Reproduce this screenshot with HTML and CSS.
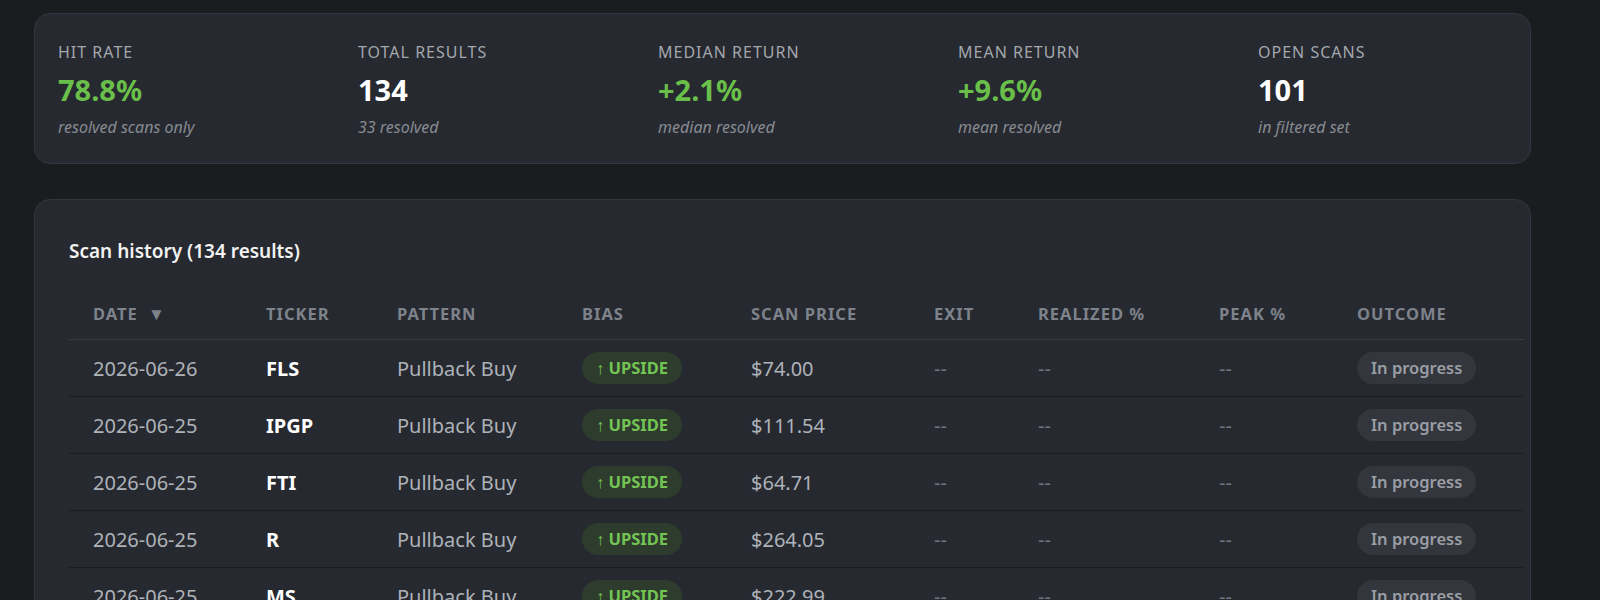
FILE: index.html
```html
<!DOCTYPE html>
<html lang="en">
<head>
    <meta charset="UTF-8">
    <meta name="viewport" content="width=device-width, initial-scale=1.0">
    <title>Scan History</title>
    <link rel="stylesheet" href="styles.css">
</head>
<body>

    <div class="page">

        <!-- Summary stats -->
        <div class="card stats">
            <div class="stat">
                <div class="stat-label">Hit Rate</div>
                <div class="stat-value green">78.8%</div>
                <div class="stat-sub">resolved scans only</div>
            </div>
            <div class="stat">
                <div class="stat-label">Total Results</div>
                <div class="stat-value">134</div>
                <div class="stat-sub">33 resolved</div>
            </div>
            <div class="stat">
                <div class="stat-label">Median Return</div>
                <div class="stat-value green">+2.1%</div>
                <div class="stat-sub">median resolved</div>
            </div>
            <div class="stat">
                <div class="stat-label">Mean Return</div>
                <div class="stat-value green">+9.6%</div>
                <div class="stat-sub">mean resolved</div>
            </div>
            <div class="stat">
                <div class="stat-label">Open Scans</div>
                <div class="stat-value">101</div>
                <div class="stat-sub">in filtered set</div>
            </div>
        </div>

        <!-- History table -->
        <div class="card history">
            <h3 class="history-title">Scan history (134 results)</h3>
            <table class="scan-table">
                <colgroup>
                    <col style="width: 173px">
                    <col style="width: 131px">
                    <col style="width: 185px">
                    <col style="width: 169px">
                    <col style="width: 183px">
                    <col style="width: 104px">
                    <col style="width: 181px">
                    <col style="width: 138px">
                    <col style="width: 191px">
                </colgroup>
                <thead>
                    <tr>
                        <th>Date <span class="sort">&#9660;</span></th>
                        <th>Ticker</th>
                        <th>Pattern</th>
                        <th>Bias</th>
                        <th>Scan Price</th>
                        <th>Exit</th>
                        <th>Realized %</th>
                        <th>Peak %</th>
                        <th>Outcome</th>
                    </tr>
                </thead>
                <tbody id="scanBody"></tbody>
            </table>
        </div>

    </div>

    <script>
        let scans = [
            { date: "2026-06-26", ticker: "FLS", price: 74.00 },
            { date: "2026-06-25", ticker: "IPGP", price: 111.54 },
            { date: "2026-06-25", ticker: "FTI", price: 64.71 },
            { date: "2026-06-25", ticker: "R", price: 264.05 },
            { date: "2026-06-25", ticker: "MS", price: 222.99 }
        ];

        function displayScans() {
            let body = document.getElementById("scanBody");
            body.innerHTML = scans.map(s =>
                `<tr>
                    <td>${s.date}</td>
                    <td class="ticker">${s.ticker}</td>
                    <td>Pullback Buy</td>
                    <td><span class="pill upside">&uarr; UPSIDE</span></td>
                    <td>$${s.price.toFixed(2)}</td>
                    <td class="empty">--</td>
                    <td class="empty">--</td>
                    <td class="empty">--</td>
                    <td><span class="pill progress">In progress</span></td>
                </tr>`
            ).join('');
        }

        displayScans();
    </script>

</body>
</html>
```

FILE: styles.css
```css
body {
    margin: 0;
    font-family: "Noto Sans", "Open Sans", sans-serif;
    background-color: #1b1c20;
    color: #aeb2b9;
}

.page {
    padding: 13px 69px 0 34px;
}

/* Cards */
.card {
    background-color: #26292f;
    border: 1px solid #33363d;
    border-radius: 16px;
}

/* Stats row */
.stats {
    display: grid;
    grid-template-columns: repeat(5, 300px);
    padding: 27px 23px 25px;
}

.stat-label {
    font-size: 16px;
    line-height: 22px;
    letter-spacing: 1px;
    text-transform: uppercase;
    color: #a3a7ae;
}

.stat-value {
    margin-top: 9px;
    font-size: 29px;
    line-height: 36px;
    font-weight: 700;
    color: #ffffff;
}

.stat-value.green {
    color: #6abf4b;
}

.stat-sub {
    margin-top: 8px;
    font-size: 16px;
    line-height: 22px;
    font-style: italic;
    color: #878b92;
}

/* History card */
.history {
    margin-top: 35px;
    padding: 38px 6px 0 34px;
    height: 420px;
}

.history-title {
    margin: 0 0 24px;
    font-size: 19px;
    line-height: 26px;
    font-weight: 600;
    color: #f2f2f2;
}

.scan-table {
    width: 1455px;
    table-layout: fixed;
    border-collapse: collapse;
}

th, td {
    padding: 0 0 0 24px;
    text-align: left;
    white-space: nowrap;
}

th {
    height: 51px;
    font-size: 16.5px;
    font-weight: 700;
    letter-spacing: 1px;
    text-transform: uppercase;
    color: #7d828b;
    border-bottom: 1px solid #393c43;
}

.sort {
    margin-left: 5px;
    font-size: 17px;
    letter-spacing: 0;
}

td {
    height: 56px;
    font-size: 20px;
    color: #aeb2b9;
    border-bottom: 1px solid #1c1d21;
}

td.ticker {
    font-weight: 700;
    color: #ffffff;
}

td.empty {
    color: #6f747c;
}

/* Pills */
.pill {
    display: inline-block;
    height: 32px;
    line-height: 32px;
    padding: 0 14px;
    border-radius: 16px;
    font-size: 16.5px;
    font-weight: 700;
}

.upside {
    background-color: #2e3c2e;
    color: #74c454;
}

.progress {
    background-color: #33363c;
    color: #9a9ea5;
    font-weight: 600;
}
```
